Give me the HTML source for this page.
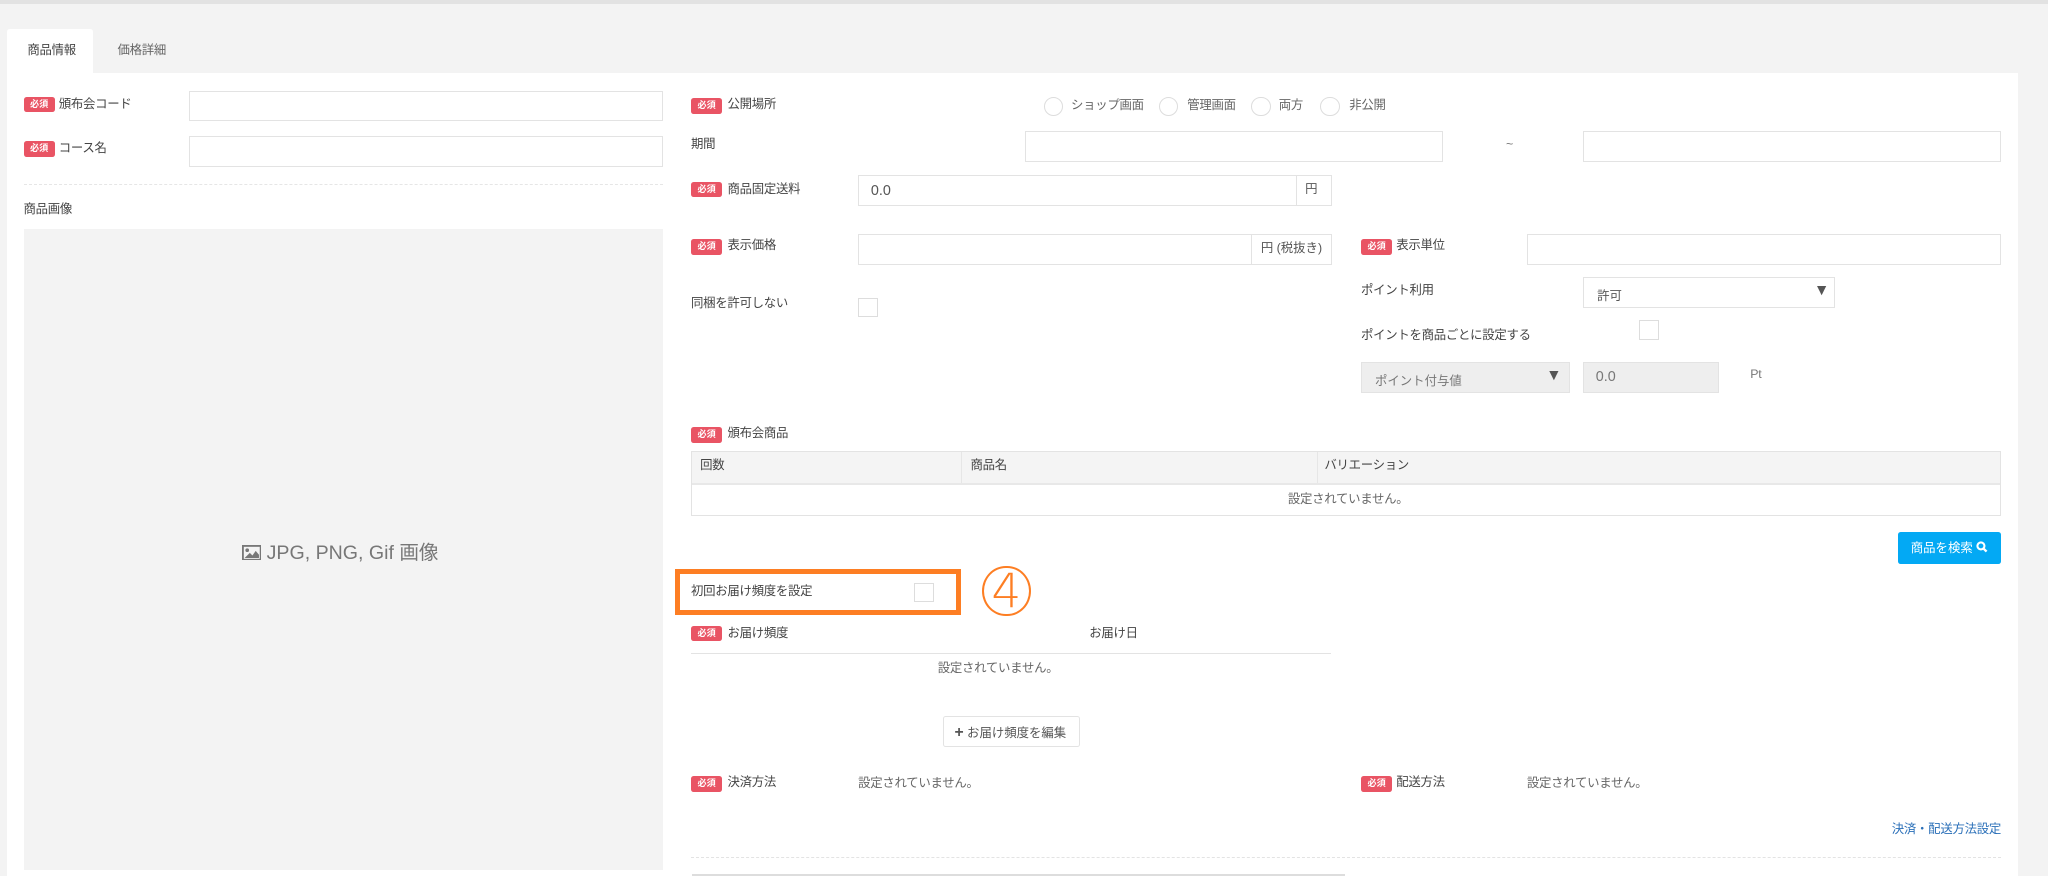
<!DOCTYPE html>
<html><head><meta charset="utf-8">
<style>
html,body{margin:0;padding:0;background:#f3f3f3;overflow:hidden;width:2048px;height:876px}
#w{zoom:1.30612;position:relative;width:1568px;height:671px;font-family:"Liberation Sans","Noto Sans CJK JP",sans-serif;color:#555;font-size:9.5px}
.a{position:absolute;white-space:nowrap}
.b{position:absolute;width:24px;height:12px;background:#e95464;border-radius:2px;color:#fff;font-size:7px;font-weight:bold;line-height:12px;text-align:center}
.in{position:absolute;border:1px solid #e3e3e3;background:#fff;box-sizing:border-box}
.lbl{position:absolute;white-space:nowrap;font-size:9.5px;color:#444;line-height:12px;letter-spacing:-0.2px}
.cb{position:absolute;width:15px;height:15px;border:1px solid #ddd;box-sizing:border-box;background:#fff}
.rd{position:absolute;width:15px;height:15px;border:1px solid #ddd;border-radius:50%;box-sizing:border-box;background:#fff}
.addon{position:absolute;top:0;bottom:0;right:0;border-left:1px solid #e3e3e3;background:#fff;font-size:9.5px;line-height:21px;padding:0 6px;color:#555}
</style></head><body><div id="w">
<div class="a" style="left:0;top:0;width:1568px;height:3px;background:#e2e2e2"></div>
<div class="a" style="left:5px;top:22px;width:66px;height:35px;background:#fff;border-radius:2px 2px 0 0"></div>
<div class="lbl" style="left:21px;top:33px;color:#444">商品情報</div>
<div class="lbl" style="left:90px;top:33px;color:#666">価格詳細</div>
<div class="a" style="left:5px;top:56px;width:1540px;height:615px;background:#fff"></div>

<div class="b" style="left:18px;top:74px">必須</div><div class="lbl" style="left:45px;top:74px">頒布会コード</div>
<div class="in" style="left:145px;top:70px;width:363px;height:23px"></div>
<div class="b" style="left:18px;top:108px">必須</div><div class="lbl" style="left:45px;top:108px">コース名</div>
<div class="in" style="left:145px;top:104px;width:363px;height:24px"></div>
<div class="a" style="left:18px;top:141px;width:490px;border-top:1px dashed #e6e6e6"></div>
<div class="lbl" style="left:18px;top:155px">商品画像</div>
<div class="a" style="left:18px;top:175px;width:490px;height:491px;background:#f3f3f3"></div>
<div class="a" style="left:185px;top:415px;font-size:15px;color:#777;line-height:18px">
<svg width="15" height="12" viewBox="0 0 15 12" style="vertical-align:-1px"><rect x="0.7" y="0.7" width="13.6" height="10.6" fill="none" stroke="#777" stroke-width="1.4"/><circle cx="4" cy="4" r="1.4" fill="#777"/><path d="M2 10 L6 6 L8 8 L10.5 4.5 L13 7.5 L13 10 Z" fill="#777"/></svg> JPG, PNG, Gif 画像</div>

<div class="b" style="left:529px;top:75px">必須</div><div class="lbl" style="left:557px;top:74px">公開場所</div>
<div class="rd" style="left:799px;top:74px"></div><div class="lbl" style="left:820px;top:75px;color:#666">ショップ画面</div>
<div class="rd" style="left:887px;top:74px"></div><div class="lbl" style="left:909px;top:75px;color:#666">管理画面</div>
<div class="rd" style="left:958px;top:74px"></div><div class="lbl" style="left:979px;top:75px;color:#666">両方</div>
<div class="rd" style="left:1011px;top:74px"></div><div class="lbl" style="left:1033px;top:75px;color:#666">非公開</div>

<div class="lbl" style="left:529px;top:105px">期間</div>
<div class="in" style="left:785px;top:100px;width:320px;height:24px"></div>
<div class="lbl" style="left:1153px;top:105px;color:#777">~</div>
<div class="in" style="left:1212px;top:100px;width:320px;height:24px"></div>

<div class="b" style="left:529px;top:139px">必須</div><div class="lbl" style="left:557px;top:139px">商品固定送料</div>
<div class="in" style="left:657px;top:134px;width:363px;height:24px"><span class="a" style="left:9px;top:5px;font-size:11px;color:#555">0.0</span><span class="addon" style="width:14px;padding:0 6px">円</span></div>

<div class="b" style="left:529px;top:183px">必須</div><div class="lbl" style="left:557px;top:182px">表示価格</div>
<div class="in" style="left:657px;top:179px;width:363px;height:24px"><span class="addon" style="padding:0 7px">円 (税抜き)</span></div>
<div class="b" style="left:1042px;top:183px">必須</div><div class="lbl" style="left:1069px;top:182px">表示単位</div>
<div class="in" style="left:1169px;top:179px;width:363px;height:24px"></div>

<div class="lbl" style="left:529px;top:227px">同梱を許可しない</div>
<div class="cb" style="left:657px;top:228px"></div>
<div class="lbl" style="left:1042px;top:217px">ポイント利用</div>
<div class="in" style="left:1212px;top:212px;width:193px;height:24px"><span class="a" style="left:10px;top:6px;font-size:9.5px">許可</span><span class="a" style="left:176px;top:3px;font-size:12px;color:#555">▼</span></div>
<div class="lbl" style="left:1042px;top:251px">ポイントを商品ごとに設定する</div>
<div class="cb" style="left:1255px;top:245px"></div>
<div class="in" style="left:1042px;top:277px;width:160px;height:24px;background:#eee"><span class="a" style="left:10px;top:6px;color:#777">ポイント付与値</span><span class="a" style="left:141px;top:3px;font-size:12px;color:#555">▼</span></div>
<div class="in" style="left:1212px;top:277px;width:104px;height:24px;background:#eee"><span class="a" style="left:9px;top:5px;font-size:11px;color:#777">0.0</span></div>
<div class="lbl" style="left:1340px;top:281px;color:#777">Pt</div>

<div class="b" style="left:529px;top:327px">必須</div><div class="lbl" style="left:557px;top:326px">頒布会商品</div>
<div class="in" style="left:529px;top:345px;width:1003px;height:50px"></div>
<div class="a" style="left:530px;top:346px;width:1001px;height:24px;background:#f4f4f4;border-bottom:2px solid #e8e8e8"></div>
<div class="a" style="left:736px;top:346px;height:24px;border-left:1px solid #e6e6e6"></div>
<div class="a" style="left:1008px;top:346px;height:24px;border-left:1px solid #e6e6e6"></div>
<div class="lbl" style="left:536px;top:351px">回数</div>
<div class="lbl" style="left:743px;top:351px">商品名</div>
<div class="lbl" style="left:1014px;top:351px">バリエーション</div>
<div class="lbl" style="left:986px;top:377px;color:#666">設定されていません。</div>

<div class="a" style="left:1453px;top:407px;width:79px;height:25px;background:#03a9f4;border-radius:2px;color:#fff;font-size:9.5px;line-height:25px;text-align:center">商品を検索 <svg width="9" height="9" viewBox="0 0 10 10" style="vertical-align:-1px"><circle cx="4.2" cy="4.2" r="3" fill="none" stroke="#fff" stroke-width="1.8"/><path d="M6.3 6.3 L9 9" stroke="#fff" stroke-width="2"/></svg></div>

<div class="a" style="left:517px;top:436px;width:219px;height:35px;border:4px solid #fd7e23;box-sizing:border-box"></div>
<div class="lbl" style="left:529px;top:447px">初回お届け頻度を設定</div>
<div class="cb" style="left:700px;top:446px"></div>
<div class="a" style="left:752px;top:433px;width:37px;height:39px;border:2px solid #fd7e23;border-radius:50%;box-sizing:border-box;color:#fd7e23;font-size:36px;line-height:36px;text-align:center;font-family:'DejaVu Sans',sans-serif;font-weight:200">4</div>

<div class="b" style="left:529px;top:479px">必須</div><div class="lbl" style="left:557px;top:479px">お届け頻度</div>
<div class="lbl" style="left:834px;top:479px">お届け日</div>
<div class="a" style="left:529px;top:500px;width:490px;border-top:1px solid #e3e3e3"></div>
<div class="lbl" style="left:718px;top:506px;color:#666">設定されていません。</div>
<div class="in" style="left:722px;top:548px;width:105px;height:24px;border-radius:2px"><span class="a" style="left:8px;top:5px;font-size:9.5px;color:#555"><b style="font-size:12px;line-height:10px">+</b> お届け頻度を編集</span></div>

<div class="b" style="left:529px;top:594px">必須</div><div class="lbl" style="left:557px;top:593px">決済方法</div>
<div class="lbl" style="left:657px;top:594px;color:#666">設定されていません。</div>
<div class="b" style="left:1042px;top:594px">必須</div><div class="lbl" style="left:1069px;top:593px">配送方法</div>
<div class="lbl" style="left:1169px;top:594px;color:#666">設定されていません。</div>
<div class="lbl" style="right:36px;top:629px;color:#2a6fb8">決済・配送方法設定</div>
<div class="a" style="left:529px;top:656px;width:1003px;border-top:1px dashed #e3e3e3"></div>
<div class="a" style="left:530px;top:669px;width:500px;height:2px;background:#ddd"></div>
</div></body></html>
